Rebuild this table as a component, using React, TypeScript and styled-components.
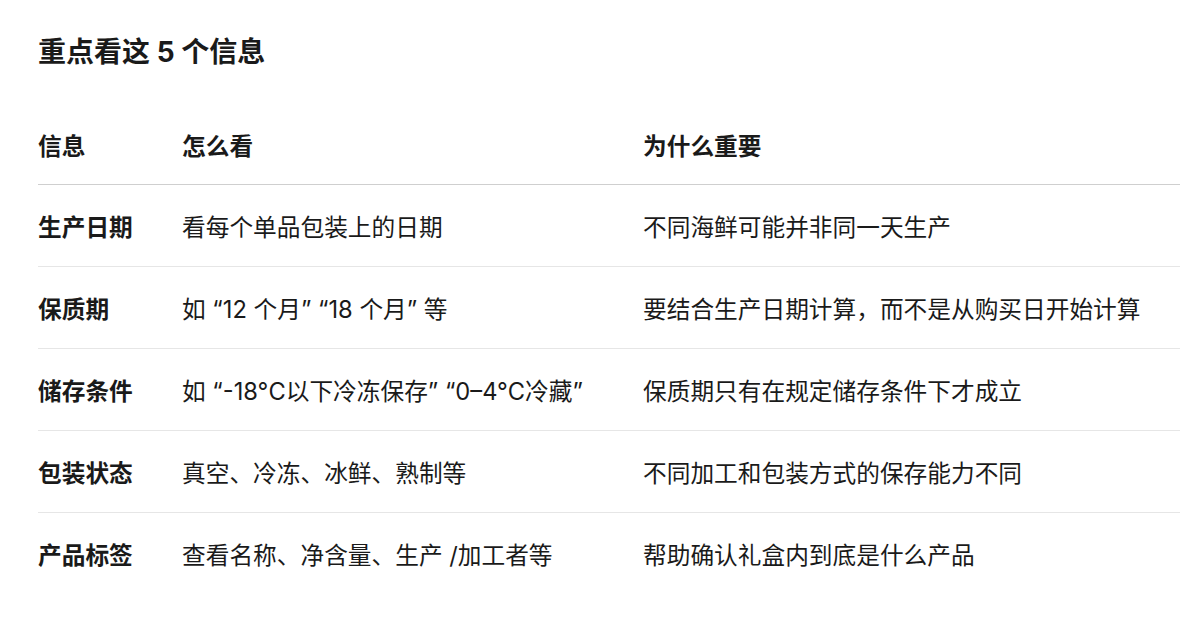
import React from 'react';
import styled, { createGlobalStyle } from 'styled-components';

const GlobalStyle = createGlobalStyle`
  html, body {
    margin: 0;
    padding: 0;
    background: #ffffff;
  }
  body {
    font-family: Inter, "Noto Sans CJK SC", sans-serif;
    color: #1a1a1a;
  }
`;

const Page = styled.div`
  padding: 32px 0 0 38px;
`;

const Title = styled.h2`
  margin: 0;
  font-size: 28px;
  line-height: 40px;
  font-weight: 700;
`;

const Table = styled.div`
  margin-top: 33px;
  display: flex;
  flex-direction: column;
`;

const Row = styled.div<{ $head?: boolean; $last?: boolean }>`
  display: grid;
  grid-template-columns: 144px 461px 1fr;
  align-items: center;
  height: ${({ $head }) => ($head ? 79 : 81)}px;
  border-bottom: 1px solid
    ${({ $head, $last }) => ($last ? 'transparent' : $head ? '#cfcfcf' : '#e6e6e6')};
  font-size: 23.7px;
  font-weight: ${({ $head }) => ($head ? 700 : 400)};
`;

const Cell = styled.div<{ $strong?: boolean }>`
  font-weight: ${({ $strong }) => ($strong ? 700 : 'inherit')};
  white-space: nowrap;
`;

const rows = [
  ['生产日期', '看每个单品包装上的日期', '不同海鲜可能并非同一天生产'],
  ['保质期', '如 “12 个月” “18 个月” 等', '要结合生产日期计算，而不是从购买日开始计算'],
  ['储存条件', '如 “-18°C以下冷冻保存”  “0–4°C冷藏”', '保质期只有在规定储存条件下才成立'],
  ['包装状态', '真空、冷冻、冰鲜、熟制等', '不同加工和包装方式的保存能力不同'],
  ['产品标签', '查看名称、净含量、生产 /加工者等', '帮助确认礼盒内到底是什么产品'],
];

export default function App() {
  return (
    <>
      <GlobalStyle />
      <Page>
        <Title>重点看这 5 个信息</Title>
        <Table>
          <Row $head>
            <Cell>信息</Cell>
            <Cell>怎么看</Cell>
            <Cell>为什么重要</Cell>
          </Row>
          {rows.map(([name, how, why], i) => (
            <Row key={name} $last={i === rows.length - 1}>
              <Cell $strong>{name}</Cell>
              <Cell>{how}</Cell>
              <Cell>{why}</Cell>
            </Row>
          ))}
        </Table>
      </Page>
    </>
  );
}
